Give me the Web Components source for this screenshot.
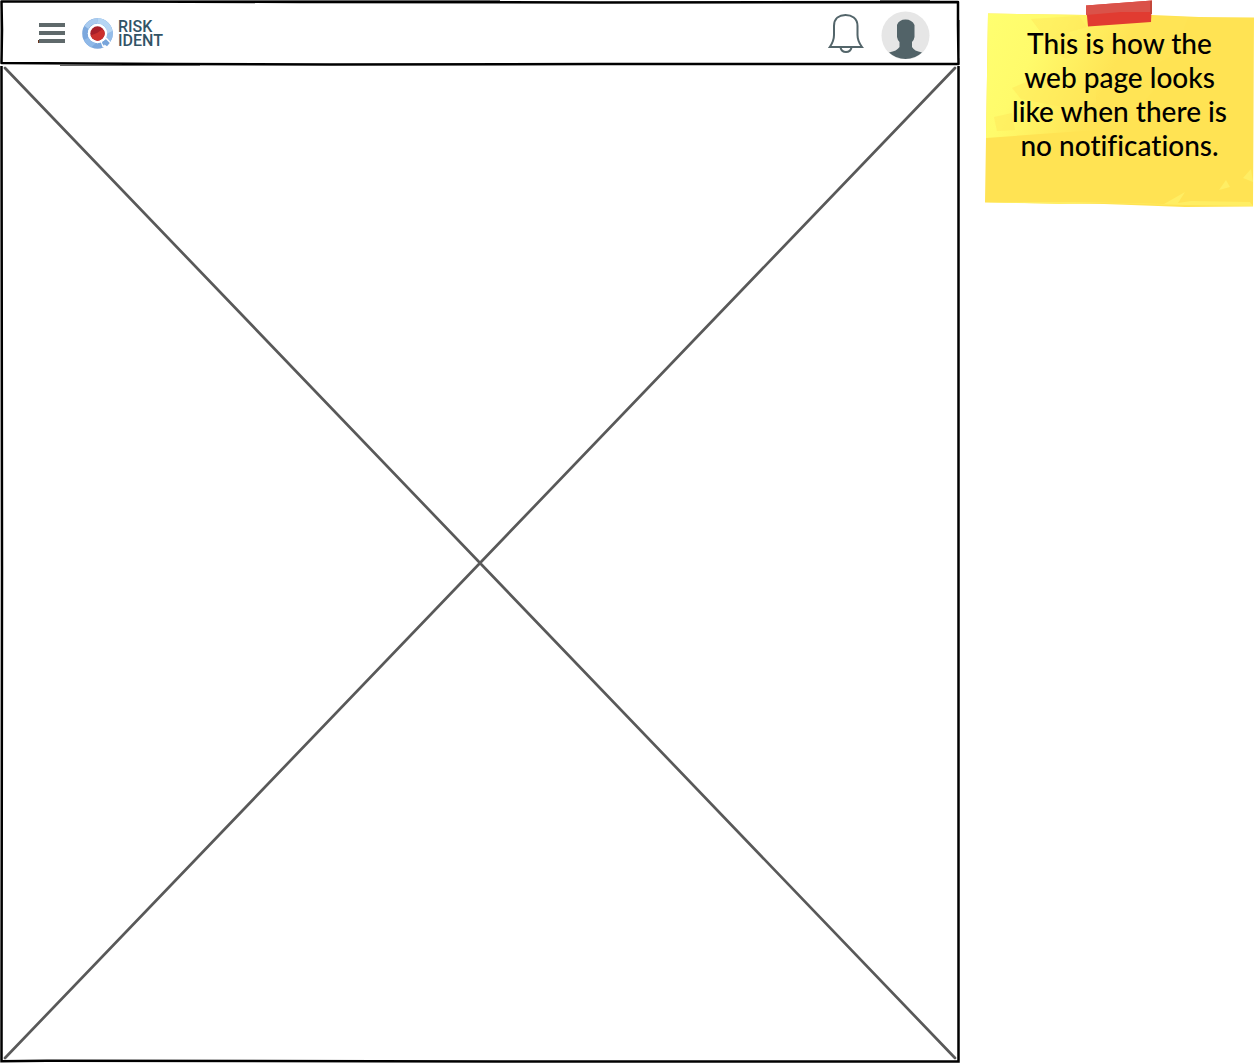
<!DOCTYPE html>
<html lang="en">
<head>
<meta charset="utf-8">
<title>Risk Ident – no notifications</title>
<style>
body { margin: 0; background: #fff; font-family: Lato, "Liberation Sans", sans-serif; }
</style>
</head>
<body>
<wire-page>
  <app-header slot="header">
    <menu-button></menu-button>
    <brand-logo></brand-logo>
    <bell-button slot="actions"></bell-button>
    <user-avatar slot="actions"></user-avatar>
  </app-header>
  <content-placeholder slot="content"></content-placeholder>
  <sticky-note slot="aside">This is how the<br>web page looks<br>like when there is<br>no notifications.</sticky-note>
</wire-page>
<script>
function define(name, html) {
  const template = document.createElement('template');
  template.innerHTML = html;
  customElements.define(name, class extends HTMLElement {
    constructor() {
      super();
      this.attachShadow({ mode: 'open' }).append(template.content.cloneNode(true));
    }
  });
}

define('wire-page', `
<style>
:host { display: grid; grid-template-columns: minmax(0, 1fr) 271px; column-gap: 24px; height: 100vh; min-height: 400px; }
main { display: flex; flex-direction: column; min-height: 0; }
</style>
<main><slot name="header"></slot><slot name="content"></slot></main>
<aside><slot name="aside"></slot></aside>`);

define('app-header', `
<style>
:host { display: block; flex: none; }
header { display: grid; height: 66px; }
.frame, .bar { grid-area: 1 / 1; }
.frame { width: 100%; height: 66px; display: block; }
.bar { display: flex; align-items: center; justify-content: space-between; padding: 0 30px 0 38px; }
.group { display: flex; align-items: center; gap: 17px; }
</style>
<header>
  <svg class="frame" viewBox="0 0 960 66" preserveAspectRatio="none" fill="none" stroke="#000" aria-hidden="true">
    <path stroke-width="2.5" stroke-linejoin="round" d="M1.5 1.5L120 1.5L300 2L600 2.5L958 2L958 25L958.5 64L600 64L330 64.5L170 64L1.5 63L2 30Z"/>
    <path stroke="#666" stroke-width="1" d="M170 .5H500M0 12V50M959.5 20V58M60 65.500H200M880 .5H930"/>
  </svg>
  <div class="bar">
    <div class="group"><slot></slot></div>
    <div class="group"><slot name="actions"></slot></div>
  </div>
</header>`);

define('menu-button', `
<style>
:host { display: block; }
button { display: block; border: 0; padding: 0; background: none; }
svg { display: block; }
</style>
<button type="button" aria-label="Menu">
  <svg width="27" height="20" viewBox="0 0 27 20"><path fill="#5f696b" d="M1 0h26v4H1zM1 8h26v4H1zM1 16h26v4H1z"/><path fill="#69331a" d="M0 17h1v3H0z"/></svg>
</button>`);

define('brand-logo', `
<style>
:host { display: block; }
a { display: flex; align-items: center; gap: 5px; color: #315366; text-decoration: none; }
svg { display: block; }
.name { display: flex; flex-direction: column; padding-top: 2px; font: 500 16px/14px Roboto, "Open Sans", sans-serif; }
</style>
<a href="#" aria-label="Risk Ident">
  <svg width="31" height="31" viewBox="0 0 31 31">
    <circle cx="15.500" cy="15.500" r="12.500" fill="none" stroke="#7ca8dd" stroke-width="5.600"/>
    <path fill="#a9cbef" d="M2.500 8A15.300 15.300 0 0 1 16 .2L15 5.600A10 10 0 0 0 6.500 11Z"/>
    <path fill="#b5d6f4" d="M16 .2A15.300 15.300 0 0 1 30.500 13L23.800 19Q27 9 18.500 6L15 5.600Z"/>
    <path fill="#95bde9" d="M30.700 13A15.300 15.300 0 0 1 27.800 24.500L23.500 20.500L25 15.500Z"/>
    <path fill="#8fb9e8" d="M2 22L6.500 19.500Q9 24 14 25L9 29.400Q4.500 27 2 22Z"/>
    <path fill="#fff" d="M18.500 23.500L24.500 19.500L29.500 25L25 30.500L20.500 29Z"/>
    <path fill="#78a5db" d="M20.500 22.800L24 21.300L27.800 25L25 28.200L22.500 26.500L22 28L20 25Z"/>
    <circle cx="15.500" cy="15.500" r="9.700" fill="#fff"/>
    <circle cx="15.500" cy="15.500" r="7.200" fill="#a71f29"/>
    <path fill="#cb302d" d="M8.600 17.500L15 15L20 11.500L22 12.500A7.200 7.200 0 0 1 10.500 20.600Z"/>
  </svg>
  <span class="name"><span>RISK</span><span>IDENT</span></span>
</a>`);

define('bell-button', `
<style>
:host { display: block; }
button { display: block; border: 0; padding: 0; background: none; }
svg { display: block; }
</style>
<button type="button" aria-label="Notifications">
  <svg width="36" height="40" viewBox="0 0 36 40" fill="none" stroke="#53656a" stroke-width="2">
    <path d="M1.800 34Q6 28 6 22V13C6 5 11.500 2 17.500 2S29.500 5 29.500 13V22Q29.500 28 34 34Z"/>
    <path d="M12.500 34.500Q13.500 39 18 39T23.500 34.500"/>
  </svg>
</button>`);

define('user-avatar', `
<style>
:host { display: block; }
button { display: block; border: 0; padding: 0; background: none; }
svg { display: block; }
</style>
<button type="button" aria-label="Account">
  <svg width="49" height="52" viewBox="0 0 49 52">
    <circle cx="24.500" cy="28.500" r="24" fill="#e6e6e6"/>
    <path fill="#526368" d="M24.500 12.500Q31 12.500 33.500 18V30Q33 33 31 35V40Q33 44 41 45.500Q34 52 24.500 52T8 45.500Q16 44 18.500 40V35Q16.500 33 16 30V18Q18 12.500 24.500 12.500Z"/>
  </svg>
</button>`);

define('content-placeholder', `
<style>
:host { display: flex; flex: 1; min-height: 0; }
svg { display: block; width: 100%; height: 100%; }
</style>
<svg viewBox="0 0 960 997" preserveAspectRatio="none" fill="none" role="img" aria-label="Page content">
  <path stroke="#595959" stroke-width="2.700" stroke-linecap="round" d="M5 2L955 992M955 2L5 992"/>
  <path stroke="#000" stroke-width="2.500" d="M958.500 0V995.500H500L47 994.800L1.500 995.200L2 500L1.500 0"/>
</svg>`);

define('sticky-note', `
<style>
:host { display: block; }
.note { display: grid; }
.note > * { grid-area: 1 / 1; }
svg { display: block; width: 100%; height: 208px; }
p { margin: 0; padding: 26px 0 0; text-align: center; color: #000; font-size: 28px; line-height: 34px; font-weight: 500; font-variant-ligatures: none; }
</style>
<div class="note">
  <svg viewBox="0 0 271 208" preserveAspectRatio="none" aria-hidden="true">
    <defs>
      <linearGradient id="sheen" x1="0" y1="0" x2="1" y2="0.3"><stop offset="0" stop-color="#ffff70"/><stop offset=".3" stop-color="#fffb6b"/><stop offset=".7" stop-color="#ffe455"/></linearGradient>
    </defs>
    <path fill="#ffe353" d="M4 13.500L102 15L168 15L215 17L270 17.500L269 206.500L201 207L120 204L1 202.500L2 138Z"/>
    <path fill="url(#sheen)" d="M4 13.500L102 15L204 17L191 54L170 65L178 80L145 120L114 130L70 133L2 138Z"/>
    <path fill="#ffe85a" fill-opacity=".5" d="M47 19L95 16L103 27L85 32L95 52L82 59L66 50L58 34ZM28 88L54 77L86 90L113 82L112 103L84 108L37 99ZM10 117L28 113L31 130L13 131ZM81 113L113 107L110 119L84 123Z"/>
    <path fill="#ffee64" d="M1 202L75 204L120 203L201 205L269 206L266 202L207 201L194 203L201 192L180 204L90 202ZM267 169L259 178L269 182ZM242 180L235 190L246 187Z"/>
    <path fill="#e13b31" d="M102 5.500L168 .5L167 22L104 26.500Z"/>
    <path fill="#da5249" d="M102 5.500L168 .5L168 12L137 12L102 15Z"/>
    <path fill="#c34639" d="M166 1H168V14H166Z"/>
  </svg>
  <p><slot></slot></p>
</div>`);
</script>
</body>
</html>
